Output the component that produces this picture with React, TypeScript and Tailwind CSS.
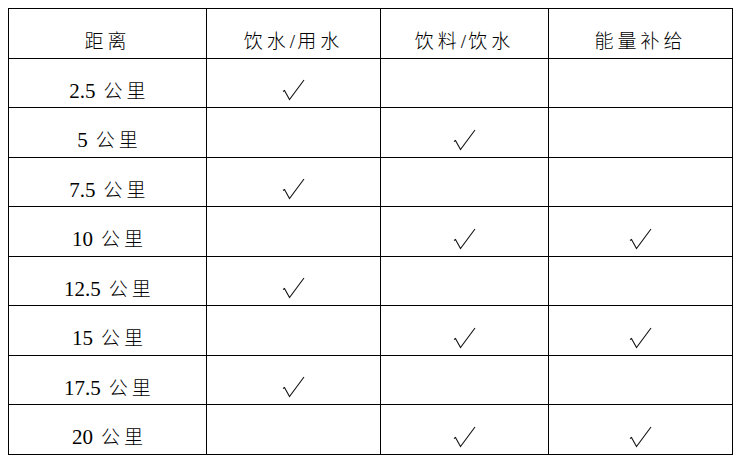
import React from 'react';

const rows = [
    { km: '2.5', water: true, drink: false, energy: false },
    { km: '5', water: false, drink: true, energy: false },
    { km: '7.5', water: true, drink: false, energy: false },
    { km: '10', water: false, drink: true, energy: true },
    { km: '12.5', water: true, drink: false, energy: false },
    { km: '15', water: false, drink: true, energy: true },
    { km: '17.5', water: true, drink: false, energy: false },
    { km: '20', water: false, drink: true, energy: true },
];

const cell = 'border-[1.5px] border-black text-center align-middle pt-[17px] leading-[20px]';
const head = `${cell} font-light text-[19px] tracking-[4px]`;

// thin radical-style tick, as in the source document
const Check = ({ on }: { on: boolean }) =>
    on ? (
        <svg width="23" height="22" viewBox="0 0 23 22" className="inline-block align-middle -mt-[4px]" aria-label="√">
            <path d="M1 12.5 L2.5 11.5 L7.5 20.5 L22 1" fill="none" stroke="#111" strokeWidth="1.1" />
        </svg>
    ) : null;

export default function App() {
    return (
        <div
            className="w-[740px] h-[461px] bg-white pt-[8px] pl-[8px] text-black"
            style={{ fontFamily: '"Liberation Serif", "Noto Sans CJK SC", serif' }}
        >
            <table className="border-collapse table-fixed w-[724px] font-light">
                <colgroup>
                    <col className="w-[198px]" />
                    <col className="w-[174px]" />
                    <col className="w-[168px]" />
                    <col className="w-[184px]" />
                </colgroup>
                <thead>
                    <tr className="h-[49.5px]">
                        <th className={head}>距离</th>
                        <th className={head}>饮水<span className="tracking-[2px]">/</span>用水</th>
                        <th className={head}>饮料<span className="tracking-[2px]">/</span>饮水</th>
                        <th className={head}>能量补给</th>
                    </tr>
                </thead>
                <tbody>
                    {rows.map((r) => (
                        <tr key={r.km} className="h-[49.5px]">
                            <td className={`${cell} text-[21px]`}>
                                {r.km}
                                <span className="text-[19px] tracking-[4px] ml-[8px] -mr-[4px]">公里</span>
                            </td>
                            <td className={cell}><Check on={r.water} /></td>
                            <td className={cell}><Check on={r.drink} /></td>
                            <td className={cell}><Check on={r.energy} /></td>
                        </tr>
                    ))}
                </tbody>
            </table>
        </div>
    );
}
